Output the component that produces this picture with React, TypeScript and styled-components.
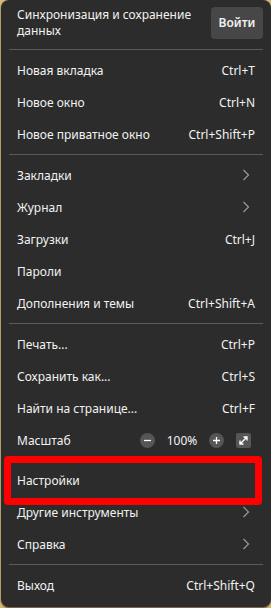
import React from "react";
import styled, { createGlobalStyle } from "styled-components";

const Global = createGlobalStyle`
  html, body { margin: 0; padding: 0; }
  body {
    background: #d9b878;
    width: 271px;
    height: 608px;
    overflow: hidden;
    font-family: "Noto Sans", "Open Sans", sans-serif;
  }
`;

const Panel = styled.div`
  box-sizing: border-box;
  margin-left: 1px;
  width: 270px;
  height: 607px;
  background: #2c2c2c;
  border-radius: 8px;
  box-shadow: 0 1px 2px rgba(0, 0, 0, 0.6);
  padding: 0 8px 6px;
  display: flex;
  flex-direction: column;
  color: #f2f2f2;
  font-size: 12px;
`;

const Header = styled.div`
  height: 47px;
  display: flex;
  align-items: center;
  justify-content: space-between;
  padding: 0 0 0 8px;
`;

const HeaderText = styled.div`
  line-height: 16px;
  width: 180px;
`;

const SignIn = styled.button`
  width: 52px;
  height: 32px;
  border: none;
  border-radius: 4px;
  background: #474747;
  color: #f2f2f2;
  font: 600 12px "Noto Sans", sans-serif;
  padding: 0;
`;

const Sep = styled.div`
  height: 1px;
  background: #5a5a5a;
  margin: 4px 0;
  flex: none;
`;

const Row = styled.div<{ $mark?: boolean }>`
  position: relative;
  height: 32px;
  flex: none;
  display: flex;
  align-items: center;
  justify-content: space-between;
  padding: 0 8px;
  ${(p) =>
    p.$mark &&
    `
    &::after {
      content: "";
      position: absolute;
      left: -5px;
      right: 1px;
      top: -8px;
      bottom: -9px;
      border: 7px solid #ff0000;
      border-radius: 4px;
      pointer-events: none;
    }
  `}
`;

const ZoomRow = styled(Row)`
  margin-bottom: 8px;
`;

const Label = styled.span`
  white-space: nowrap;
`;

const Shortcut = styled.span`
  white-space: nowrap;
`;

const Chevron = styled.svg`
  width: 8px;
  height: 12px;
  margin-right: 5px;
  flex: none;
`;

const ZoomControls = styled.div`
  display: flex;
  align-items: center;
  margin-right: 4px;
`;

const RoundBtn = styled.div`
  width: 15px;
  height: 15px;
  border-radius: 50%;
  background: #565656;
  display: flex;
  align-items: center;
  justify-content: center;
`;

const ZoomValue = styled.span`
  width: 54px;
  text-align: center;
`;

const SquareBtn = styled.div`
  width: 15px;
  height: 15px;
  border-radius: 2px;
  background: #565656;
  margin-left: 12px;
  display: flex;
  align-items: center;
  justify-content: center;
`;

const ChevronIcon = () => (
  <Chevron viewBox="0 0 8 12">
    <path d="M1.5 1 L6.5 6 L1.5 11" fill="none" stroke="#9c9c9c" strokeWidth="1.1" />
  </Chevron>
);

type Item = { label: string; right?: string; sub?: boolean };

const group1: Item[] = [
  { label: "Новая вкладка", right: "Ctrl+T" },
  { label: "Новое окно", right: "Ctrl+N" },
  { label: "Новое приватное окно", right: "Ctrl+Shift+P" },
];
const group2: Item[] = [
  { label: "Закладки", sub: true },
  { label: "Журнал", sub: true },
  { label: "Загрузки", right: "Ctrl+J" },
  { label: "Пароли" },
  { label: "Дополнения и темы", right: "Ctrl+Shift+A" },
];
const group3: Item[] = [
  { label: "Печать...", right: "Ctrl+P" },
  { label: "Сохранить как...", right: "Ctrl+S" },
  { label: "Найти на странице...", right: "Ctrl+F" },
];

const MenuRow = ({ item, mark }: { item: Item; mark?: boolean }) => (
  <Row $mark={mark}>
    <Label>{item.label}</Label>
    {item.right && <Shortcut>{item.right}</Shortcut>}
    {item.sub && <ChevronIcon />}
  </Row>
);

export default function App() {
  return (
    <>
      <Global />
      <Panel>
        <Header>
          <HeaderText>Синхронизация и сохранение данных</HeaderText>
          <SignIn>Войти</SignIn>
        </Header>
        <Sep />
        {group1.map((i) => (
          <MenuRow key={i.label} item={i} />
        ))}
        <Sep />
        {group2.map((i) => (
          <MenuRow key={i.label} item={i} />
        ))}
        <Sep />
        {group3.map((i) => (
          <MenuRow key={i.label} item={i} />
        ))}
        <ZoomRow>
          <Label>Масштаб</Label>
          <ZoomControls>
            <RoundBtn>
              <svg width="9" height="9" viewBox="0 0 9 9">
                <path d="M1 4.5 H8" stroke="#fff" strokeWidth="1.3" />
              </svg>
            </RoundBtn>
            <ZoomValue>100%</ZoomValue>
            <RoundBtn>
              <svg width="9" height="9" viewBox="0 0 9 9">
                <path d="M1 4.5 H8 M4.5 1 V8" stroke="#fff" strokeWidth="1.3" />
              </svg>
            </RoundBtn>
            <SquareBtn>
              <svg width="11" height="11" viewBox="0 0 11 11">
                <path
                  d="M2 9 L9 2 M5.5 2 H9 V5.5 M2 5.5 V9 H5.5"
                  fill="none"
                  stroke="#fff"
                  strokeWidth="1.4"
                />
              </svg>
            </SquareBtn>
          </ZoomControls>
        </ZoomRow>
        <MenuRow item={{ label: "Настройки" }} mark />
        <MenuRow item={{ label: "Другие инструменты", sub: true }} />
        <MenuRow item={{ label: "Справка", sub: true }} />
        <Sep />
        <MenuRow item={{ label: "Выход", right: "Ctrl+Shift+Q" }} />
      </Panel>
    </>
  );
}
